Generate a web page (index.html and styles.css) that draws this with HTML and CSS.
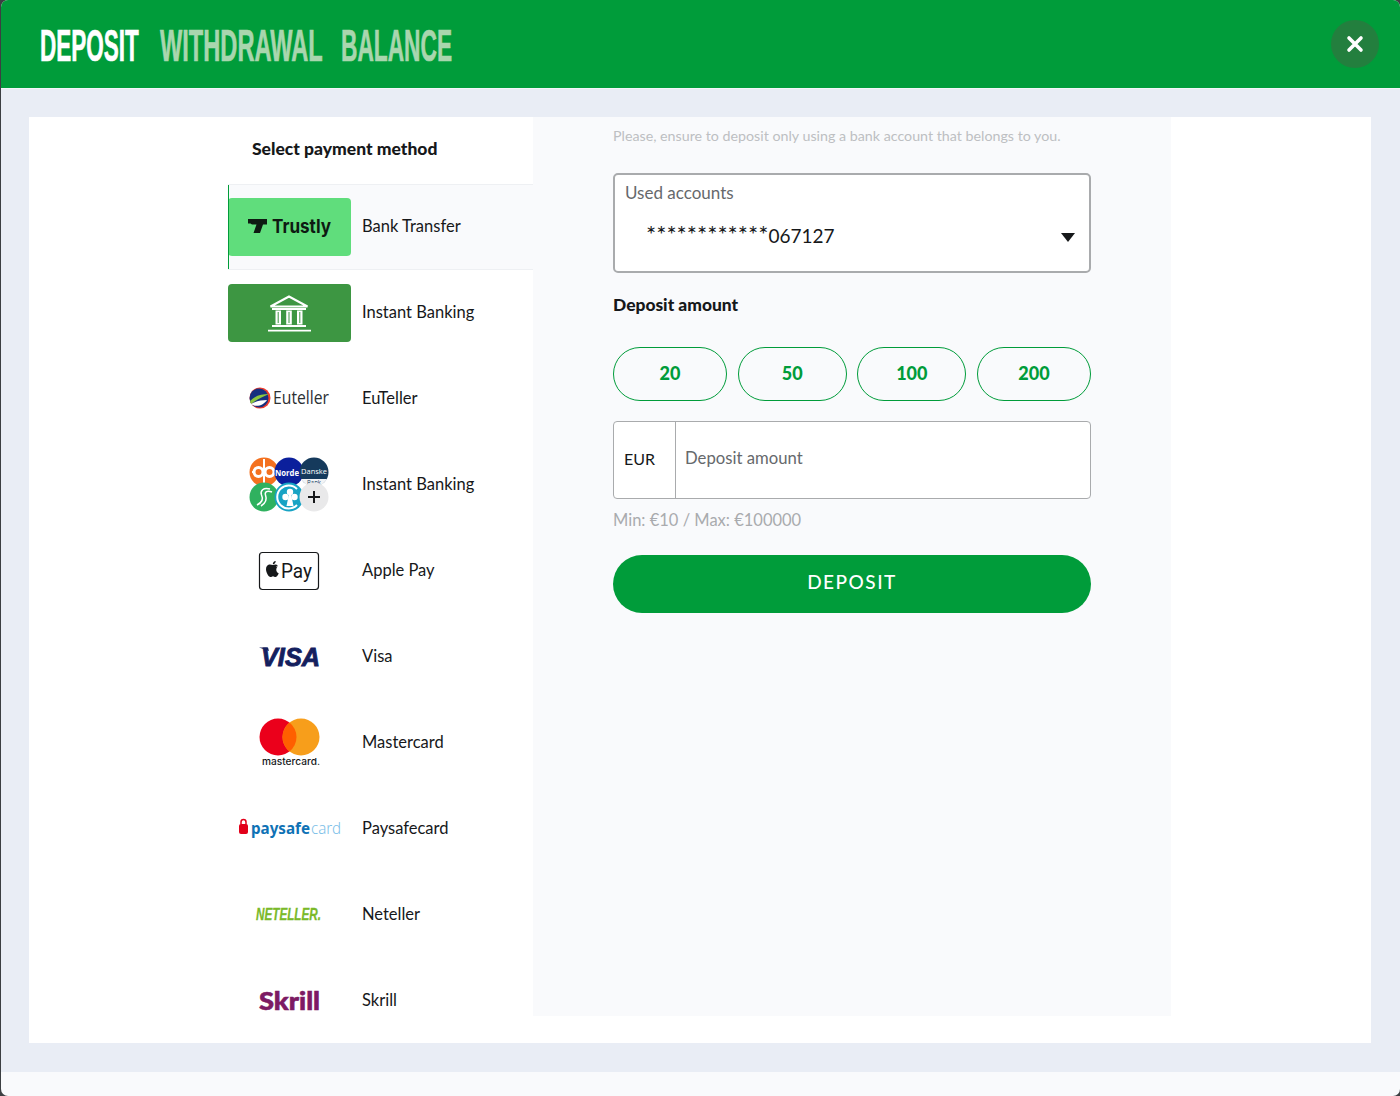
FILE: index.html
```html
<!DOCTYPE html>
<html lang="en">
<head>
    <meta charset="UTF-8">
    <title>Deposit</title>
    <link rel="stylesheet" href="styles.css">
</head>
<body>
    <div class="modal">
        <div class="top">
            <div class="tabs">
                <svg width="100" height="46" viewBox="0 0 100 46"><text y="40" class="tab current" transform="scale(.5 1)">DEPOSIT</text></svg>
                <svg width="161" height="46" viewBox="0 0 161 46"><text y="40" class="tab" transform="scale(.525 1)">WITHDRAWAL</text></svg>
                <svg width="111" height="46" viewBox="0 0 111 46"><text y="40" class="tab" transform="scale(.505 1)">BALANCE</text></svg>
            </div>
            <div class="close">
                <svg width="18" height="18" viewBox="0 0 18 18"><path d="M3 3L15 15M15 3L3 15" stroke="#fff" stroke-width="3.6" stroke-linecap="round"/></svg>
            </div>
        </div>
        <div class="content">
            <div class="panel">
                <div class="methods">
                    <div class="methods-title">Select payment method</div>
                    <ul class="list">
                        <li class="current">
                            <div class="logo logo-trustly">
                                <svg width="123" height="58" viewBox="0 0 123 58">
                                    <path d="M20 21H39V26.500H35L32 35H25.500L28.500 26.500H24L22.500 25.500H20Z" fill="#0e1a12"/>
                                    <text x="44" y="35" class="t-trustly" textLength="59" lengthAdjust="spacingAndGlyphs">Trustly</text>
                                </svg>
                            </div>
                            <span>Bank Transfer</span>
                        </li>
                        <li>
                            <div class="logo logo-bank">
                                <svg width="123" height="58" viewBox="0 0 123 58">
                                    <path d="M42.500 22.500L61 12.500L79.500 22.500Z" fill="none" stroke="#fff" stroke-width="2"/>
                                    <path d="M44 25H78M44 42H78M40 46.700H83" stroke="#fff" stroke-width="1.800"/>
                                    <path d="M47.500 26.500H53V40.500H47.500ZM58.200 26.500H63.800V40.500H58.200ZM69 26.500H74.500V40.500H69Z" fill="#fff"/>
                                    <path d="M50.200 28V39M61 28V39M71.800 28V39" stroke="#3d9642" stroke-width="1"/>
                                </svg>
                            </div>
                            <span>Instant Banking</span>
                        </li>
                        <li>
                            <div class="logo">
                                <svg width="123" height="58" viewBox="0 0 123 58">
                                    <circle cx="32" cy="28" r="10.500" fill="#ef3b2d"/>
                                    <circle cx="31" cy="28" r="9.500" fill="#16307f"/>
                                    <path d="M22 31C28 25 34 24 41 24C35 27 29 29 23 34Z" fill="#8cc63f"/>
                                    <path d="M23 34C28 31 34 30 39 30C36 35 28 38 23 34Z" fill="#fff"/>
                                    <text x="45" y="34" class="t-euteller" textLength="56" lengthAdjust="spacingAndGlyphs">Euteller</text>
                                </svg>
                            </div>
                            <span>EuTeller</span>
                        </li>
                        <li>
                            <div class="logo">
                                <svg width="123" height="58" viewBox="0 0 123 58">
                                    <circle cx="36" cy="16" r="14.500" fill="#f4711f"/>
                                    <path d="M36 3V29M24 16H48" stroke="#fff" stroke-width="2"/>
                                    <circle cx="30.500" cy="16" r="4.500" fill="#f4711f" stroke="#fff" stroke-width="3"/>
                                    <circle cx="41.500" cy="16" r="4.500" fill="#f4711f" stroke="#fff" stroke-width="3"/>
                                    <circle cx="61" cy="16" r="14.500" fill="#0b1f9c"/>
                                    <text x="47" y="20" class="t-nordea" textLength="24" lengthAdjust="spacingAndGlyphs">Norde</text>
                                    <circle cx="86" cy="16" r="14.500" fill="#153a5c"/>
                                    <path d="M73 23H99C96 28 91 31 86 31C81 31 76 28 73 23Z" fill="#f2f4f6"/>
                                    <text x="73" y="18" class="t-danske" textLength="26" lengthAdjust="spacingAndGlyphs">Danske</text>
                                    <text x="79" y="29" class="t-bank" textLength="14" lengthAdjust="spacingAndGlyphs">Bank</text>
                                    <circle cx="36" cy="41" r="14.500" fill="#2fb15f"/>
                                    <path d="M42 33C35 31 32 35 33.500 39C35 42 35 46 29 49" fill="none" stroke="#fff" stroke-width="1.500"/>
                                    <path d="M44 36C39 34 36.500 36 37.500 39C39 43 38 47 33 50" fill="none" stroke="#fff" stroke-width="1.500"/>
                                    <circle cx="61" cy="41" r="14.500" fill="#17a3c4"/>
                                    <path d="M69 33A11.500 11.500 0 1 0 69 49" fill="none" stroke="#fff" stroke-width="2"/>
                                    <circle cx="62" cy="36" r="3.200" fill="#fff"/>
                                    <circle cx="57.500" cy="41" r="3.200" fill="#fff"/>
                                    <circle cx="66.500" cy="41" r="3.200" fill="#fff"/>
                                    <path d="M61 38H63L65.500 50H58.500Z" fill="#fff"/>
                                    <circle cx="86" cy="41" r="14.500" fill="#e9e9ea"/>
                                    <path d="M80 41H92M86 35V47" stroke="#16181a" stroke-width="2"/>
                                </svg>
                            </div>
                            <span>Instant Banking</span>
                        </li>
                        <li>
                            <div class="logo">
                                <svg width="123" height="58" viewBox="0 0 123 58">
                                    <rect x="31.500" y="10.500" width="59" height="37" rx="3" fill="#fff" stroke="#16181a" stroke-width="1.200"/>
                                    <path d="M47 24.500C48 24.500 49.300 23.800 49.800 23.200C47.900 22 45.800 23 44.800 23C43.700 23 42.500 22.300 41.200 22.600C39.500 23 38 24.600 38 27.200C38 30.400 40.500 35 42.500 35C43.500 35 44 34.200 45 34.200C46 34.200 46.500 35 47.600 35C49.200 35 50.600 31.800 50.700 31.300C49.200 30.800 48 29 48.300 27C48.500 25.900 49 25 49.800 24.500Z" fill="#16181a"/>
                                    <path d="M44.800 22.300C44.800 20.600 46 19.200 47.700 19C47.800 20.800 46.500 22.300 44.800 22.300Z" fill="#16181a"/>
                                    <text x="53" y="35.500" class="t-pay" textLength="31" lengthAdjust="spacingAndGlyphs">Pay</text>
                                </svg>
                            </div>
                            <span>Apple Pay</span>
                        </li>
                        <li>
                            <div class="logo">
                                <svg width="123" height="58" viewBox="0 0 123 58">
                                    <path d="M31 19.500H40L41 23Z" fill="#14205e"/>
                                    <text x="33" y="38" class="t-visa" textLength="59" lengthAdjust="spacingAndGlyphs">VISA</text>
                                </svg>
                            </div>
                            <span>Visa</span>
                        </li>
                        <li>
                            <div class="logo">
                                <svg width="123" height="58" viewBox="0 0 123 58">
                                    <circle cx="50" cy="23" r="18.500" fill="#eb001b"/>
                                    <circle cx="73" cy="23" r="18.500" fill="#f79e1b"/>
                                    <path d="M61.500 8.500A18.500 18.500 0 0 1 61.500 37.500A18.500 18.500 0 0 1 61.500 8.500Z" fill="#ff5f00"/>
                                    <text x="34" y="51" class="t-master" textLength="58" lengthAdjust="spacingAndGlyphs">mastercard.</text>
                                </svg>
                            </div>
                            <span>Mastercard</span>
                        </li>
                        <li>
                            <div class="logo">
                                <svg width="123" height="58" viewBox="0 0 123 58">
                                    <rect x="11" y="24" width="9" height="10" rx="2" fill="#e2001a"/>
                                    <path d="M13 24.500V22A2.500 2.500 0 0 1 18 22V24.500" fill="none" stroke="#e2001a" stroke-width="1.500"/>
                                    <text x="23" y="33.500" class="t-paysafe" textLength="59" lengthAdjust="spacingAndGlyphs">paysafe</text>
                                    <text x="83" y="33.500" class="t-card" textLength="30" lengthAdjust="spacingAndGlyphs">card</text>
                                </svg>
                            </div>
                            <span>Paysafecard</span>
                        </li>
                        <li>
                            <div class="logo">
                                <svg width="123" height="58" viewBox="0 0 123 58">
                                    <text x="28" y="34" class="t-neteller" textLength="65" lengthAdjust="spacingAndGlyphs">NETELLER.</text>
                                </svg>
                            </div>
                            <span>Neteller</span>
                        </li>
                        <li>
                            <div class="logo">
                                <svg width="123" height="58" viewBox="0 0 123 58">
                                    <text x="31" y="38" class="t-skrill" textLength="61" lengthAdjust="spacingAndGlyphs">Skrill</text>
                                </svg>
                            </div>
                            <span>Skrill</span>
                        </li>
                    </ul>
                </div>
                <div class="form-side">
                    <div class="form">
                        <p class="note">Please, ensure to deposit only using a bank account that belongs to you.</p>
                        <div class="select">
                            <div class="select-label">Used accounts</div>
                            <div class="select-value">
                                <span><span class="stars">************</span>067127</span>
                                <i class="arrow"></i>
                            </div>
                        </div>
                        <div class="amount-title">Deposit amount</div>
                        <div class="pills">
                            <button class="pill wide">20</button>
                            <button class="pill">50</button>
                            <button class="pill">100</button>
                            <button class="pill wide">200</button>
                        </div>
                        <div class="amount">
                            <div class="currency">EUR</div>
                            <input type="text" placeholder="Deposit amount">
                        </div>
                        <div class="limits">Min: €10 / Max: €100000</div>
                        <button class="submit">DEPOSIT</button>
                    </div>
                </div>
            </div>
        </div>
        <div class="bottom"></div>
    </div>
</body>
</html>
```

FILE: styles.css
```css
* {
    padding: 0;
    margin: 0;
    box-sizing: border-box;
}
html, body {
    height: 100%;
    overflow: hidden;
}
body {
    background: #3c3f42;
    font-family: Lato, "Noto Sans", sans-serif;
    color: #16181a;
}
.modal {
    height: 1096px;
    margin-left: 1px;
    background: #f9fafc;
    border-radius: 7px;
    overflow: hidden;
}
.top {
    height: 88px;
    background: #009c3a;
    padding: 0 21px 0 39px;
    display: flex;
    align-items: center;
    justify-content: space-between;
}
.tabs {
    display: flex;
    gap: 20px;
    align-items: center;
}
.tabs svg {
    display: block;
    overflow: visible;
}
.tab {
    font: bold 45px "Liberation Sans", sans-serif;
    fill: #a9d6ae;
    stroke: #a9d6ae;
    stroke-width: .7px;
}
.tab.current {
    fill: #fff;
    stroke: #fff;
}
.close {
    width: 48px;
    height: 48px;
    border-radius: 50%;
    background: #237f3e;
    display: flex;
    align-items: center;
    justify-content: center;
}
.content {
    height: 984px;
    border-top: 1px solid #f4f6fa;
    background: #e9edf5;
    padding: 28px 29px 0 28px;
}
.panel {
    height: 926px;
    background: #fff;
    padding-left: 199px;
    display: flex;
    align-items: flex-start;
    overflow: hidden;
}
.methods {
    width: 305px;
    flex-shrink: 0;
}
.methods-title {
    height: 67px;
    padding: 22px 0 0 24px;
    font-size: 17.500px;
    line-height: 20px;
    font-weight: 900;
}
.list {
    list-style: none;
}
.list li {
    height: 86px;
    display: flex;
    align-items: center;
    gap: 11px;
    font-size: 16.500px;
}
.list li > span {
    padding-bottom: 3px;
}
.list li.current {
    background: #f9fafc;
    border-top: 1px solid #eef0f3;
    border-bottom: 1px solid #eef0f3;
    position: relative;
}
.list li.current:before {
    content: "";
    position: absolute;
    left: 0;
    top: 0;
    bottom: 0;
    width: 1px;
    background: #009c3a;
}
.logo {
    width: 123px;
    height: 58px;
    flex-shrink: 0;
    border-radius: 4px;
}
.logo svg {
    display: block;
}
.logo-trustly {
    background: #60dd7c;
}
.logo-bank {
    background: #3d9642;
}
.t-trustly {
    font: bold 19px Inter, sans-serif;
    fill: #0e1a12;
}
.t-euteller {
    font: 18px "Open Sans", sans-serif;
    fill: #2b2f33;
}
.t-nordea {
    font: bold 9px "Open Sans", sans-serif;
    fill: #fff;
}
.t-danske {
    font: 7.500px "Open Sans", sans-serif;
    fill: #fff;
}
.t-bank {
    font: 6.500px "Open Sans", sans-serif;
    fill: #153a5c;
}
.t-pay {
    font: 400 20px Roboto, sans-serif;
    fill: #16181a;
}
.t-visa {
    font: italic bold 26px "Liberation Sans", sans-serif;
    fill: #14205e;
    stroke: #14205e;
    stroke-width: .9px;
}
.t-master {
    font: 500 9.500px Inter, sans-serif;
    fill: #16181a;
}
.t-paysafe {
    font: bold 15.500px "Noto Sans", sans-serif;
    fill: #0f72b5;
}
.t-card {
    font: 300 15.500px "Noto Sans", sans-serif;
    fill: #7cc0e8;
}
.t-neteller {
    font: italic bold 16.500px "Liberation Sans", sans-serif;
    fill: #7ab929;
    stroke: #7ab929;
    stroke-width: .3px;
}
.t-skrill {
    font: 900 24px Lato, sans-serif;
    fill: #7d1a63;
    stroke: #7d1a63;
    stroke-width: .6px;
}
.form-side {
    width: 638px;
    height: 899px;
    background: #f9fafc;
    padding-left: 80px;
}
.form {
    width: 478px;
}
.note {
    height: 56px;
    padding-top: 9px;
    font-size: 14.250px;
    line-height: 20px;
    color: #bdbfc2;
}
.select {
    height: 100px;
    background: #fff;
    border: 2px solid #a9abad;
    border-radius: 5px;
    padding: 8px 10px 0;
}
.select-label {
    font-size: 17px;
    line-height: 20px;
    color: #66696c;
}
.select-value {
    margin-top: 20px;
    padding: 0 4px 0 21px;
    height: 26px;
    font-size: 19px;
    line-height: 26px;
    display: flex;
    align-items: center;
    justify-content: space-between;
}
.stars {
    font-size: 24px;
    line-height: 20px;
}
.arrow {
    width: 0;
    height: 0;
    margin-top: 3px;
    border-left: 7px solid transparent;
    border-right: 7px solid transparent;
    border-top: 9px solid #16181a;
}
.amount-title {
    margin-top: 22px;
    height: 20px;
    font-size: 17.400px;
    line-height: 20px;
    font-weight: 900;
}
.pills {
    margin-top: 32px;
    display: flex;
    justify-content: space-between;
}
.pill {
    flex: 0 0 109px;
    height: 54px;
    padding-bottom: 2px;
    background: transparent;
    border: 1.500px solid #009c3a;
    border-radius: 27px;
    color: #009c3a;
    font-family: inherit;
    font-size: 18px;
    font-weight: 900;
}
.pill.wide {
    flex-basis: 114px;
}
.amount {
    margin-top: 20px;
    height: 78px;
    display: flex;
    background: #fff;
    border: 1.500px solid #a9abad;
    border-radius: 4px;
}
.currency {
    width: 62px;
    border-right: 1.500px solid #a9abad;
    font-size: 16px;
    line-height: 73px;
    padding-left: 10px;
}
.amount input {
    flex: 1;
    border: 0;
    outline: 0;
    background: transparent;
    padding: 0 0 4px 9px;
    font-family: inherit;
    font-size: 16.700px;
}
.amount input::placeholder {
    color: #66696c;
    opacity: 1;
}
.limits {
    margin-top: 11px;
    height: 20px;
    font-size: 16.500px;
    line-height: 20px;
    color: #a9abae;
}
.submit {
    display: block;
    width: 100%;
    height: 58px;
    margin-top: 25px;
    padding-bottom: 5px;
    border: 0;
    border-radius: 29px;
    background: #009c3a;
    color: #fff;
    font-family: inherit;
    font-size: 19px;
    font-weight: 500;
    letter-spacing: 1.500px;
}
```
